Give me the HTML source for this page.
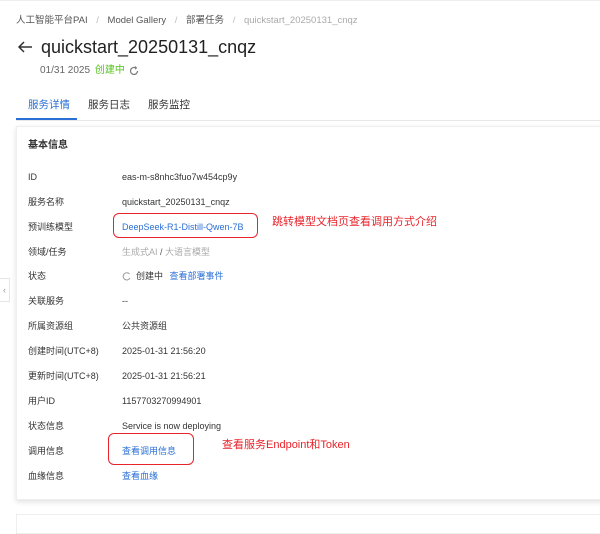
<!DOCTYPE html>
<html><head><meta charset="utf-8"><style>
*{margin:0;padding:0;box-sizing:border-box}
html,body{width:600px;height:523px}
body{background:#fff;font-family:"Liberation Sans","Noto Sans CJK SC",sans-serif;position:relative;overflow:hidden;color:#333}
.a{position:absolute;white-space:nowrap;line-height:12px}
.l{font-size:9px;color:#333;left:28px}
.v{font-size:9px;color:#333;left:122px}
.b{color:#2a6fd6}
</style></head><body>
<div class="a" style="top:0;left:0;width:600px;height:1px;background:#eee"></div>
<div class="a" style="left:16px;top:15px;font-size:9.5px;color:#555">人工智能平台PAI <span style="color:#bbb;margin:0 6px">/</span> Model Gallery <span style="color:#bbb;margin:0 6px">/</span> 部署任务 <span style="color:#bbb;margin:0 6px">/</span> <span style="color:#aaa">quickstart_20250131_cnqz</span></div>
<svg class="a" style="left:17px;top:41px" width="16" height="12" viewBox="0 0 16 12"><path d="M15 6H2M7 1L2 6l5 5" stroke="#333" stroke-width="1.5" fill="none"/></svg>
<div class="a" style="left:41px;top:36px;font-size:18px;line-height:22px;color:#222">quickstart_20250131_cnqz</div>
<div class="a" style="left:40px;top:64px;font-size:10px;line-height:14px;color:#666">01/31 2025 <span style="color:#52c41a;margin-left:2px">创建中</span></div>
<svg class="a" style="left:129px;top:66px" width="10" height="10" viewBox="0 0 10 10"><path d="M8.5 5A3.5 3.5 0 1 1 6.5 1.8" stroke="#777" stroke-width="1.2" fill="none"/><path d="M6 0.5l1.5 1.4L6 3.3" stroke="#777" stroke-width="1" fill="none"/></svg>
<div class="a" style="left:28px;top:98px;font-size:10.5px;line-height:14px;color:#2a6fd6">服务详情</div>
<div class="a" style="left:88px;top:98px;font-size:10.5px;line-height:14px;color:#333">服务日志</div>
<div class="a" style="left:148px;top:98px;font-size:10.5px;line-height:14px;color:#333">服务监控</div>
<div class="a" style="left:16px;top:118px;width:61px;height:2px;background:#2a6fd6"></div>
<div class="a" style="left:16px;top:120px;width:584px;height:1px;background:#e8e8e8"></div>
<div class="a" style="left:16px;top:126px;width:590px;height:374px;border:1px solid #eee;box-shadow:0 2px 5px rgba(0,0,0,.12);background:#fff"></div>
<div class="a" style="left:28px;top:140px;font-size:10px;font-weight:bold;color:#333">基本信息</div>
<div class="a" style="left:0;top:278px;width:10px;height:24px;border:1px solid #e5e5e5;border-left:none;background:#fff;font-size:9px;color:#999;line-height:22px;text-align:center">‹</div>
<div class="a l" style="top:171px">ID</div><div class="a v" style="top:171px">eas-m-s8nhc3fuo7w454cp9y</div>
<div class="a l" style="top:196px">服务名称</div><div class="a v" style="top:196px">quickstart_20250131_cnqz</div>
<div class="a l" style="top:221px">预训练模型</div><div class="a v b" style="top:221px">DeepSeek-R1-Distill-Qwen-7B</div>
<div class="a l" style="top:246px">领域/任务</div><div class="a v" style="top:246px;color:#aaa">生成式AI <span style="color:#555">/</span> 大语言模型</div>
<div class="a l" style="top:270px">状态</div>
<svg class="a" style="left:122px;top:272px" width="9" height="9" viewBox="0 0 9 9"><path d="M7.5 2A3.6 3.6 0 1 0 8 6" stroke="#999" stroke-width="1" fill="none"/></svg>
<div class="a v" style="left:136px;top:270px">创建中 <span class="b" style="margin-left:4px">查看部署事件</span></div>
<div class="a l" style="top:295px">关联服务</div><div class="a v" style="top:295px">--</div>
<div class="a l" style="top:320px">所属资源组</div><div class="a v" style="top:320px">公共资源组</div>
<div class="a l" style="top:345px">创建时间(UTC+8)</div><div class="a v" style="top:345px">2025-01-31 21:56:20</div>
<div class="a l" style="top:370px">更新时间(UTC+8)</div><div class="a v" style="top:370px">2025-01-31 21:56:21</div>
<div class="a l" style="top:395px">用户ID</div><div class="a v" style="top:395px">1157703270994901</div>
<div class="a l" style="top:420px">状态信息</div><div class="a v" style="top:420px">Service is now deploying</div>
<div class="a l" style="top:445px">调用信息</div><div class="a v b" style="top:445px">查看调用信息</div>
<div class="a l" style="top:470px">血缘信息</div><div class="a v b" style="top:470px">查看血缘</div>
<div class="a" style="left:113px;top:213px;width:145px;height:25px;border:1.5px solid #e8232a;border-radius:6px"></div>
<div class="a" style="left:272px;top:215px;font-size:11px;line-height:14px;color:#e8232a">跳转模型文档页查看调用方式介绍</div>
<div class="a" style="left:108px;top:433px;width:86px;height:32px;border:1.5px solid #e8232a;border-radius:6px"></div>
<div class="a" style="left:222px;top:438px;font-size:11px;line-height:14px;color:#e8232a">查看服务Endpoint和Token</div>
<div class="a" style="left:16px;top:514px;width:590px;height:20px;border:1px solid #eee"></div>
</body></html>
